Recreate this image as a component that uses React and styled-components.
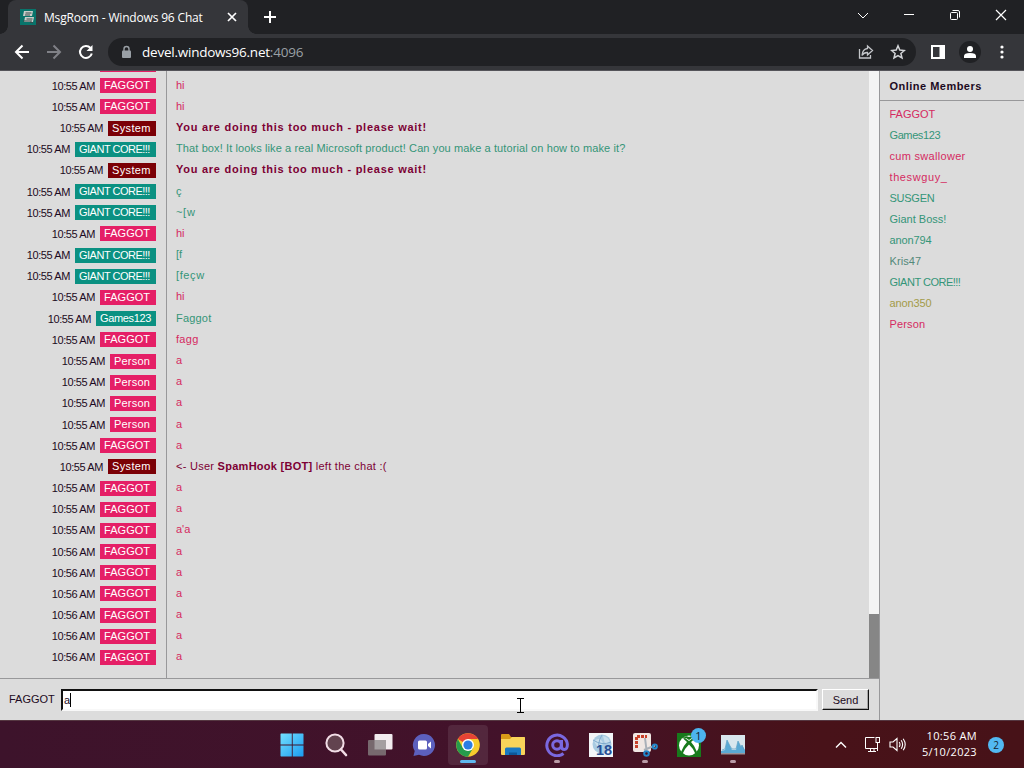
import React from 'react';
import styled, { createGlobalStyle, css } from 'styled-components';

const PINK = '#e51f66';
const TEAL = '#0b9182';
const MAROON = '#7b0006';

const GlobalStyle = createGlobalStyle`
  * { box-sizing: border-box; }
  body {
    margin: 0;
    overflow: hidden;
    font-family: "Liberation Sans", Arial, sans-serif;
  }
  svg { display: block; flex: none; }
`;

const Screen = styled.div`
  width: 1024px;
  height: 768px;
  display: flex;
  flex-direction: column;
  overflow: hidden;
`;

/* Browser chrome */

const TabStrip = styled.header`
  height: 34px;
  flex: none;
  display: flex;
  padding-left: 8px;
  background: #202124;
  color: #fff;
`;

const Tab = styled.div`
  position: relative;
  width: 240px;
  display: flex;
  align-items: center;
  padding: 0 9px 0 12px;
  border-radius: 8px 8px 0 0;
  background: #35363a;
  font: 12px "Open Sans", sans-serif;
  letter-spacing: -0.17px;

  &::before,
  &::after {
    content: '';
    position: absolute;
    bottom: 0;
    width: 8px;
    height: 8px;
  }
  &::before {
    left: -8px;
    background: radial-gradient(circle at 0 0, transparent 7.5px, #35363a 8px);
  }
  &::after {
    right: -8px;
    background: radial-gradient(circle at 100% 0, transparent 7.5px, #35363a 8px);
  }
`;

const TabTitle = styled.span`
  flex: 1;
  margin-left: 8px;
  white-space: nowrap;
`;

const NewTab = styled.div`
  display: flex;
  align-items: center;
  margin-left: 14px;
`;

const WindowControls = styled.div`
  display: flex;
  margin-left: auto;
  height: 29px;
`;

const WindowButton = styled.div`
  width: 46px;
  display: grid;
  place-items: center;
`;

const Toolbar = styled.div`
  height: 37px;
  flex: none;
  display: flex;
  align-items: center;
  padding: 0 6px;
  background: #35363a;
  border-bottom: 1px solid #55545a;
`;

const ToolButton = styled.div`
  width: 32px;
  height: 28px;
  flex: none;
  display: grid;
  place-items: center;
`;

const AddressBar = styled.div`
  flex: 1;
  height: 28px;
  display: flex;
  align-items: center;
  margin: 0 6px;
  padding: 0 2px 0 12px;
  border-radius: 14px;
  background: #202124;
  color: #fff;
  font: 13.5px "Open Sans", sans-serif;
  letter-spacing: -0.23px;
`;

const Address = styled.span`
  flex: 1;
  margin-left: 9px;
  white-space: nowrap;
`;

const Port = styled.span`
  color: #9aa0a6;
`;

const Avatar = styled.div`
  width: 22px;
  height: 22px;
  border-radius: 50%;
  background: #202124;
  display: grid;
  place-items: center;
`;

/* Chat page */

const Page = styled.main`
  flex: 1;
  min-height: 0;
  display: flex;
  background: #dcdcdc;
  color: #1c0a22;
  font-size: 11px;
`;

const ChatPane = styled.section`
  width: 880px;
  display: flex;
  flex-direction: column;
  border-right: 1px solid #98989a;
`;

const History = styled.div`
  height: 608px;
  flex: none;
  display: flex;
  border-bottom: 1px solid #98989a;
`;

const Log = styled.div`
  flex: 1;
  display: flex;
  flex-direction: column;
  justify-content: flex-end;
  overflow: hidden;
  background: linear-gradient(#98989a, #98989a) 166px 0 / 1px 100% no-repeat;
  padding-bottom: 10px;
`;

const Row = styled.div`
  height: 21.185px;
  flex: none;
  display: flex;
  align-items: center;
`;

const Meta = styled.div`
  width: 156px;
  display: flex;
  justify-content: flex-end;
  align-items: center;
`;

const Time = styled.time`
  letter-spacing: -0.4px;
  white-space: nowrap;
`;

const NameTag = styled.span`
  width: ${(p) => p.$w}px;
  height: 15px;
  margin-left: 5px;
  padding-left: 4px;
  background: ${(p) => p.$bg};
  color: #fff;
  line-height: 15px;
  letter-spacing: ${(p) => p.$track}px;
  white-space: nowrap;
`;

const Message = styled.p`
  margin: 0 0 2px 20px;
  color: ${(p) => p.$color};
  letter-spacing: ${(p) => p.$track || 0}px;
  white-space: nowrap;
  ${(p) =>
    p.$bold &&
    css`
      font-weight: bold;
    `}
`;

const ScrollTrack = styled.div`
  width: 10px;
  display: flex;
  align-items: flex-end;
  background: #f4f4f4;
`;

const ScrollThumb = styled.div`
  width: 10px;
  height: 64px;
  background: #868686;
`;

const Composer = styled.form`
  flex: 1;
  display: flex;
  align-items: center;
  padding: 0 10px 0 9px;
`;

const Nick = styled.label`
  width: 52px;
  flex: none;
  padding-bottom: 1px;
`;

const Entry = styled.div`
  position: relative;
  width: 757px;
  height: 22px;
  display: flex;
  align-items: center;
  padding-left: 1px;
  background: #fff;
  border: 2px solid;
  border-color: #111 #f8f8f8 #f8f8f8 #111;
`;

const Caret = styled.i`
  width: 1px;
  height: 14px;
  background: #000;
`;

const Pointer = styled.svg`
  position: absolute;
  left: 453px;
  top: 7px;
`;

const SendButton = styled.div`
  width: 47px;
  height: 21px;
  margin-left: auto;
  display: grid;
  place-items: center;
  border: 1px solid;
  border-color: #fff #111 #111 #fff;
  box-shadow: inset -1px -1px #a5a5a5;
`;

const Sidebar = styled.aside`
  flex: 1;
`;

const SidebarTitle = styled.h2`
  height: 30px;
  margin: 0 0 3px;
  padding-left: 9.500px;
  border-bottom: 1px solid #98989a;
  font-size: 11px;
  line-height: 30px;
  letter-spacing: 0.48px;
`;

const Member = styled.div`
  height: 21px;
  padding-left: 9.5px;
  line-height: 21px;
  color: ${(p) => p.$color};
  letter-spacing: ${(p) => p.$track}px;
`;

/* Desktop taskbar */

const Taskbar = styled.footer`
  height: 48px;
  flex: none;
  display: flex;
  padding-left: 270px;
  border-top: 1px solid #553741;
  background: linear-gradient(90deg, #3d132b, #43122a 50%, #481219 80%, #471218);
  color: #fff;
`;

const TaskbarItem = styled.div`
  position: relative;
  width: 44.1px;
  display: grid;
  place-items: center;
`;

const AppPlate = styled.div`
  width: 40px;
  height: 40px;
  display: grid;
  place-items: center;
  border-radius: 4px;
  background: ${(p) => (p.$active ? 'rgba(255,255,255,0.09)' : 'none')};
`;

const RunMark = styled.i`
  position: absolute;
  bottom: 5px;
  left: 50%;
  width: ${(p) => (p.$active ? 16 : 6)}px;
  height: 3px;
  border-radius: 2px;
  transform: translateX(-50%);
  background: ${(p) => (p.$active ? '#5fb8ef' : '#b99ba6')};
`;

const Badge = styled.span`
  position: absolute;
  left: 24px;
  top: 7px;
  width: 15px;
  height: 15px;
  border-radius: 50%;
  background: #4cb4ee;
  color: #10202c;
  font: 11px/15px "Open Sans", sans-serif;
  text-align: center;
`;

const Tray = styled.div`
  display: flex;
  align-items: center;
  margin-left: auto;
  padding-right: 20px;
`;

const TrayIcon = styled.div`
  margin-right: ${(p) => p.$gap}px;
`;

const Clock = styled.div`
  width: 62px;
  margin-top: -1px;
  text-align: right;
  font: 11px/16px "Open Sans", sans-serif;
  letter-spacing: 0.33px;
  white-space: nowrap;
`;

const Notices = styled.div`
  width: 16px;
  height: 16px;
  margin-left: 11px;
  border-radius: 50%;
  background: #52b9f2;
  color: #16242e;
  font: 10px/16px "Open Sans", sans-serif;
  text-align: center;
`;

const users = {
  f: { name: 'FAGGOT', w: 56, bg: PINK, color: '#d52a61', track: 0.05 },
  s: { name: 'System', w: 48, bg: MAROON, color: '#7c0034', track: 0.35 },
  g: { name: 'GIANT CORE!!!', w: 81, bg: TEAL, color: '#349578', track: -0.5 },
  n: { name: 'Games123', w: 60, bg: TEAL, color: '#349578', track: -0.35 },
  p: { name: 'Person', w: 46, bg: PINK, color: '#d52a61', track: 0.2 },
};

const wait = 'You are doing this too much - please wait!';

const log = [
  ['s', wait, 0.74, true],
  ['g', 'That box! It looks like a real Microsoft product! Can you make a tutorial on how to make it?', 0.113],
  ['s', wait, 0.74, true],
  ['g', 'ç'],
  ['g', '~[w', 0.7],
  ['f', 'hi'],
  ['g', '[f'],
  ['g', '[feçw', 0.6],
  ['f', 'hi'],
  ['n', 'Faggot', 0.2],
  ['f', 'fagg', 0.3],
  ['p', 'a'],
  ['p', 'a'],
  ['p', 'a'],
  ['p', 'a'],
  ['f', 'a'],
  ['s', <>{'<- User '}<b>SpamHook [BOT]</b> left the chat :(</>, 0.27],
  ['f', 'a'],
  ['f', 'a'],
  ['f', "a'a"],
  ['f', 'a'],
  ['f', 'a'],
  ['f', 'a'],
  ['f', 'a'],
  ['f', 'a'],
  ['f', 'a'],
];
log.unshift(['f', 'hi'], ['f', 'hi']);

const members = [
  ['FAGGOT', '#d52a61', 0],
  ['Games123', '#349578', -0.4],
  ['cum swallower', '#d52a61', 0.3],
  ['theswguy_', '#d52a61', 0.6],
  ['SUSGEN', '#349578', -0.25],
  ['Giant Boss!', '#349578', 0],
  ['anon794', '#349578', -0.1],
  ['Kris47', '#53897a', 0.1],
  ['GIANT CORE!!!', '#349578', -0.5],
  ['anon350', '#a39b48', -0.1],
  ['Person', '#d52a61', 0.15],
];

const Favicon = () => (
  <svg width="16" height="16" viewBox="0 0 16 16">
    <path d="M0 0h16v16H0z" fill="#08746b" />
    <path d="M4 2h9l-1 5H3zM5 8h9l-1 5H4z" fill="#c8ceca" />
    <path d="M5.5 4h6M5 6h5M6.500 10h6M3 12h9M10 13l3 1" stroke="#3a4a4a" fill="none" />
  </svg>
);

const Stroke = ({ size = 16, d, color = '#fff', w = 1, children }) => (
  <svg width={size} height={size} viewBox={`0 0 ${size} ${size}`} fill="none" stroke={color} strokeWidth={w}>
    {d && <path d={d} />}
    {children}
  </svg>
);

const StartIcon = () => (
  <svg width="24" height="24" viewBox="0 0 24 24">
    <defs>
      <linearGradient id="start" x1="0" y1="0" x2="1" y2="1">
        <stop offset="0" stopColor="#74e0ff" />
        <stop offset="1" stopColor="#1a9bf0" />
      </linearGradient>
    </defs>
    <path d="M1 .5h10.800v11H.5V1zM12.700.5H23l.5.5v10.500H12.700zM.5 12.500h11.300v11H1l-.5-.5zM12.700 12.500h10.800V23l-.5.500H12.700z" fill="url(#start)" />
  </svg>
);

const SearchIcon = () => (
  <svg width="24" height="24" viewBox="0 0 24 24">
    <circle cx="11" cy="10" r="8.600" fill="#62434f" stroke="#f2dde6" strokeWidth="2" />
    <path d="m17 16.500 5 5.500" stroke="#f2dde6" strokeWidth="2.600" strokeLinecap="round" />
  </svg>
);

const TaskViewIcon = () => (
  <svg width="26" height="24" viewBox="0 0 26 24">
    <rect x="7.500" y="1" width="18" height="15.500" rx="1" fill="#f2ecef" />
    <rect x="1" y="7" width="18" height="15.500" rx="1" fill="#77696e" />
    <path d="M7.500 7H19v9.500H7.500z" fill="#a49fa1" />
  </svg>
);

const ChatIcon = () => (
  <svg width="24" height="24" viewBox="0 0 24 24">
    <path d="M12 1a11 11 0 1 1-5 20.800L1.500 23l1.200-5A11 11 0 0 1 12 1z" fill="#5c60bd" />
    <rect x="6" y="7.500" width="9" height="9" rx="1.500" fill="#fff" />
    <path d="m16 11 3-2.500v7L16 13z" fill="#fff" />
  </svg>
);

const ChromeIcon = () => (
  <svg width="24" height="24" viewBox="0 0 24 24">
    <circle cx="12" cy="12" r="11.800" fill="#f7cb2d" />
    <path d="M12 12 1.800 6.100A11.800 11.800 0 0 1 22.200 6.100H12z" fill="#e64335" />
    <path d="M1.800 6.100A11.800 11.800 0 0 0 12 23.800l5.100-8.900L12 12 6.900 14.900z" fill="#269c4c" />
    <circle cx="12" cy="12" r="6" fill="#fff" />
    <circle cx="12" cy="12" r="4.600" fill="#2b7de4" />
  </svg>
);

const FolderIcon = () => (
  <svg width="24" height="24" viewBox="0 0 24 24">
    <path d="M0 2q0-1 1-1h7l2 3h13q1 0 1 1v4H0z" fill="#d89b18" />
    <path d="M0 6h9l2-2h12q1 0 1 1v16q0 1-1 1H1q-1 0-1-1z" fill="#f8d45a" />
    <path d="M4 22v-6q0-1.500 1.500-1.500h13q1.500 0 1.500 1.500v6z" fill="#1978c2" />
    <path d="M8 22v-2.500h8V22z" fill="#0c5798" />
  </svg>
);

const AtIcon = () => (
  <svg width="24" height="24" viewBox="0 0 24 24" fill="none" stroke="#7a68df" strokeWidth="3">
    <circle cx="12" cy="12" r="4.300" />
    <path d="M16.500 7v6q0 3.500 2.800 3.500 3.100 0 3.100-5A10.300 10.300 0 1 0 18.500 20.500" />
  </svg>
);

const GlobeIcon = () => (
  <svg width="24" height="24" viewBox="0 0 24 24">
    <path d="M0 0h24v24H0z" fill="#f3f5f8" />
    <circle cx="13" cy="11" r="9.500" fill="#a9cbe2" />
    <path d="M5 8q5-4 8 0t-4 7zM14 3q6 1 7 7l-5 1z" fill="#c9dfed" />
    <path d="M4 7q9 6 18 2M13 2q-6 9-1 18" fill="none" stroke="#7faacd" />
    <text x="7" y="22" fontFamily="Liberation Sans, sans-serif" fontWeight="bold" fontSize="14.500" fill="#264f96">18</text>
  </svg>
);

const SnipIcon = () => (
  <svg width="24" height="24" viewBox="0 0 24 24" overflow="visible">
    <rect x="0" y="0" width="18" height="19" rx="2" fill="#f0e7e3" />
    <path d="M3.500 15V3.500H14" fill="none" stroke="#c7402a" strokeWidth="3" strokeDasharray="3 1" />
    <path d="m12 5 1.500 12M22 12.500 11 17" stroke="#a9b0b8" strokeWidth="2" />
    <circle cx="13.500" cy="20.500" r="2.300" fill="none" stroke="#2387cb" strokeWidth="2" />
    <circle cx="21.800" cy="13.500" r="2.100" fill="none" stroke="#2387cb" strokeWidth="2" />
  </svg>
);

const XboxIcon = () => (
  <svg width="24" height="24" viewBox="0 0 24 24">
    <path d="M0 0h24v24H0z" fill="#177a1b" />
    <circle cx="12" cy="12.500" r="10" fill="#fff" />
    <path d="M5 5.500q3-2 7 1.500 4-3.500 7-1.500-3-3.500-7-1.500-4-2-7 1.500zM4 19Q6.500 12.500 10 9L6 5.500 8 5l4 3 4-3 2 .5L14 9q3.500 3.500 6 10l-1.500 2Q16 15 12 11.500 8 15 5.500 21z" fill="#177a1b" />
  </svg>
);

const MonitorIcon = () => (
  <svg width="24" height="20" viewBox="0 0 24 20">
    <path d="M0 0h24v18H0z" fill="#d9e7ee" />
    <path d="M0 18v-2l4-1 2-10 3 6 2 4 4 0 2-9 3 6 1-2 3 5v3z" fill="#5aa9d4" />
    <path d="m1 15 3-1 2-9 3 6 2 3h4l2-8 3 6 1-2 2 5" fill="none" stroke="#5a9fc4" strokeWidth=".7" />
    <path d="M0 18h24v1.500H0z" fill="#9b9398" />
  </svg>
);

const apps = [
  { Icon: StartIcon },
  { Icon: SearchIcon },
  { Icon: TaskViewIcon },
  { Icon: ChatIcon },
  { Icon: ChromeIcon, active: true },
  { Icon: FolderIcon },
  { Icon: AtIcon, running: true },
  { Icon: GlobeIcon },
  { Icon: SnipIcon, running: true },
  { Icon: XboxIcon, badge: '1' },
  { Icon: MonitorIcon, running: true },
];

export default function App() {
  return (
    <Screen>
      <GlobalStyle />
      <TabStrip>
        <Tab>
          <Favicon />
          <TabTitle>MsgRoom - Windows 96 Chat</TabTitle>
          <Stroke size={14} d="m3 3 8 8m0-8-8 8" w={1.7} />
        </Tab>
        <NewTab>
          <Stroke size={16} d="M8 2v12M2 8h12" w={2} />
        </NewTab>
        <WindowControls>
          <WindowButton><Stroke size={12} d="m1 4 5 5 5-5" /></WindowButton>
          <WindowButton><Stroke size={10} d="M0 4.500h10" /></WindowButton>
          <WindowButton>
            <Stroke size={10} d="M2.500.5H8q1.500 0 1.500 1.500v5.500">
              <rect x=".5" y="2.500" width="7" height="7" rx="1" />
            </Stroke>
          </WindowButton>
          <WindowButton><Stroke size={12} d="m1 1 10 10m0-10L1 11" w={1.2} /></WindowButton>
        </WindowControls>
      </TabStrip>

      <Toolbar>
        <ToolButton><Stroke d="M15 8H2m6.500-6.500L2 8l6.500 6.500" w={2} /></ToolButton>
        <ToolButton><Stroke d="M1 8h13M7.500 1.500 14 8l-6.500 6.500" w={2} color="#808187" /></ToolButton>
        <ToolButton>
          <Stroke w={2} d="M13.800 9.500A6 6 0 1 1 12.500 4">
            <path d="M14.500 1v6h-6z" fill="#fff" stroke="none" />
          </Stroke>
        </ToolButton>
        <AddressBar>
          <svg width="13" height="14" viewBox="0 0 13 14">
            <rect x="2" y="5.500" width="9" height="7.500" rx="1" fill="#9aa0a6" />
            <path d="M4 6V4a2.500 2.500 0 0 1 5 0v2" fill="none" stroke="#9aa0a6" strokeWidth="1.400" />
          </svg>
          <Address>devel.windows96.net<Port>:4096</Port></Address>
          <ToolButton>
            <Stroke w={1.3} color="#c3c5c9" d="M1.500 5v9h11v-3M9.500 2l5 4.500-5 4.500V8.500Q6 8.300 4 11.500 4.500 5 9.500 4.500z" />
          </ToolButton>
          <ToolButton>
            <Stroke w={1.5} color="#d3d5d8" d="m8 1.800 1.800 4.300 4.600.4-3.500 3 1.100 4.500L8 11.600 4 14l1.100-4.500-3.500-3 4.600-.4z" />
          </ToolButton>
        </AddressBar>
        <ToolButton>
          <svg width="14" height="14" viewBox="0 0 14 14">
            <path fill="#fff" fillRule="evenodd" d="M0 0h14v14H0zM2 2v10h6.500V2z" />
          </svg>
        </ToolButton>
        <ToolButton>
          <Avatar>
            <svg width="12" height="12" viewBox="0 0 12 12" fill="#fff">
              <circle cx="6" cy="3" r="3" />
              <path d="M0 12V10q0-3 6-3t6 3v2z" />
            </svg>
          </Avatar>
        </ToolButton>
        <ToolButton>
          <svg width="4" height="14" viewBox="0 0 4 14" fill="#fff">
            <circle cx="2" cy="2" r="1.600" />
            <circle cx="2" cy="7" r="1.600" />
            <circle cx="2" cy="12" r="1.600" />
          </svg>
        </ToolButton>
      </Toolbar>

      <Page>
        <ChatPane>
          <History>
            <Log>
              <Row>
                <Meta><NameTag $w={56} $bg={PINK} /></Meta>
              </Row>
              {log.map(([id, text, track, bold], i) => {
                const u = users[id];
                return (
                  <Row key={i}>
                    <Meta>
                      <Time>{i < 22 ? '10:55 AM' : '10:56 AM'}</Time>
                      <NameTag $w={u.w} $bg={u.bg} $track={u.track}>{u.name}</NameTag>
                    </Meta>
                    <Message $color={u.color} $track={track} $bold={bold}>{text}</Message>
                  </Row>
                );
              })}
            </Log>
            <ScrollTrack><ScrollThumb /></ScrollTrack>
          </History>
          <Composer>
            <Nick>FAGGOT</Nick>
            <Entry>
              a<Caret />
              <Pointer width="9" height="15" viewBox="0 0 9 15" fill="none" stroke="#000">
                <path d="M1 .5h7M4.500 1v13M1 14.500h7" />
              </Pointer>
            </Entry>
            <SendButton>Send</SendButton>
          </Composer>
        </ChatPane>
        <Sidebar>
          <SidebarTitle>Online Members</SidebarTitle>
          {members.map(([name, color, track]) => (
            <Member key={name} $color={color} $track={track}>{name}</Member>
          ))}
        </Sidebar>
      </Page>

      <Taskbar>
        {apps.map(({ Icon, active, running, badge }, i) => (
          <TaskbarItem key={i}>
            <AppPlate $active={active}><Icon /></AppPlate>
            {(active || running) && <RunMark $active={active} />}
            {badge && <Badge>{badge}</Badge>}
          </TaskbarItem>
        ))}
        <Tray>
          <TrayIcon $gap={17}><Stroke size={12} d="m1 8.500 5-5 5 5" w={1.4} /></TrayIcon>
          <TrayIcon $gap={8}>
            <Stroke size={17} d="M10.500 1.500h-9v11h12v-5M4 15.500h8M6.500 12.500v3M10 12.500v3M13.500 6v9">
              <rect x="12" y="1.500" width="3.500" height="5" />
            </Stroke>
          </TrayIcon>
          <TrayIcon $gap={9}>
            <Stroke size={17} w={1.1} d="M1 6v5h3l4 3.500v-12L4 6zM10.200 6q1.600 2.500 0 5M12.200 4.300q2.800 4.200 0 8.400M14.200 2.700q4 5.800 0 11.600" />
          </TrayIcon>
          <Clock>10:56 AM<br />5/10/2023</Clock>
          <Notices>2</Notices>
        </Tray>
      </Taskbar>
    </Screen>
  );
}
